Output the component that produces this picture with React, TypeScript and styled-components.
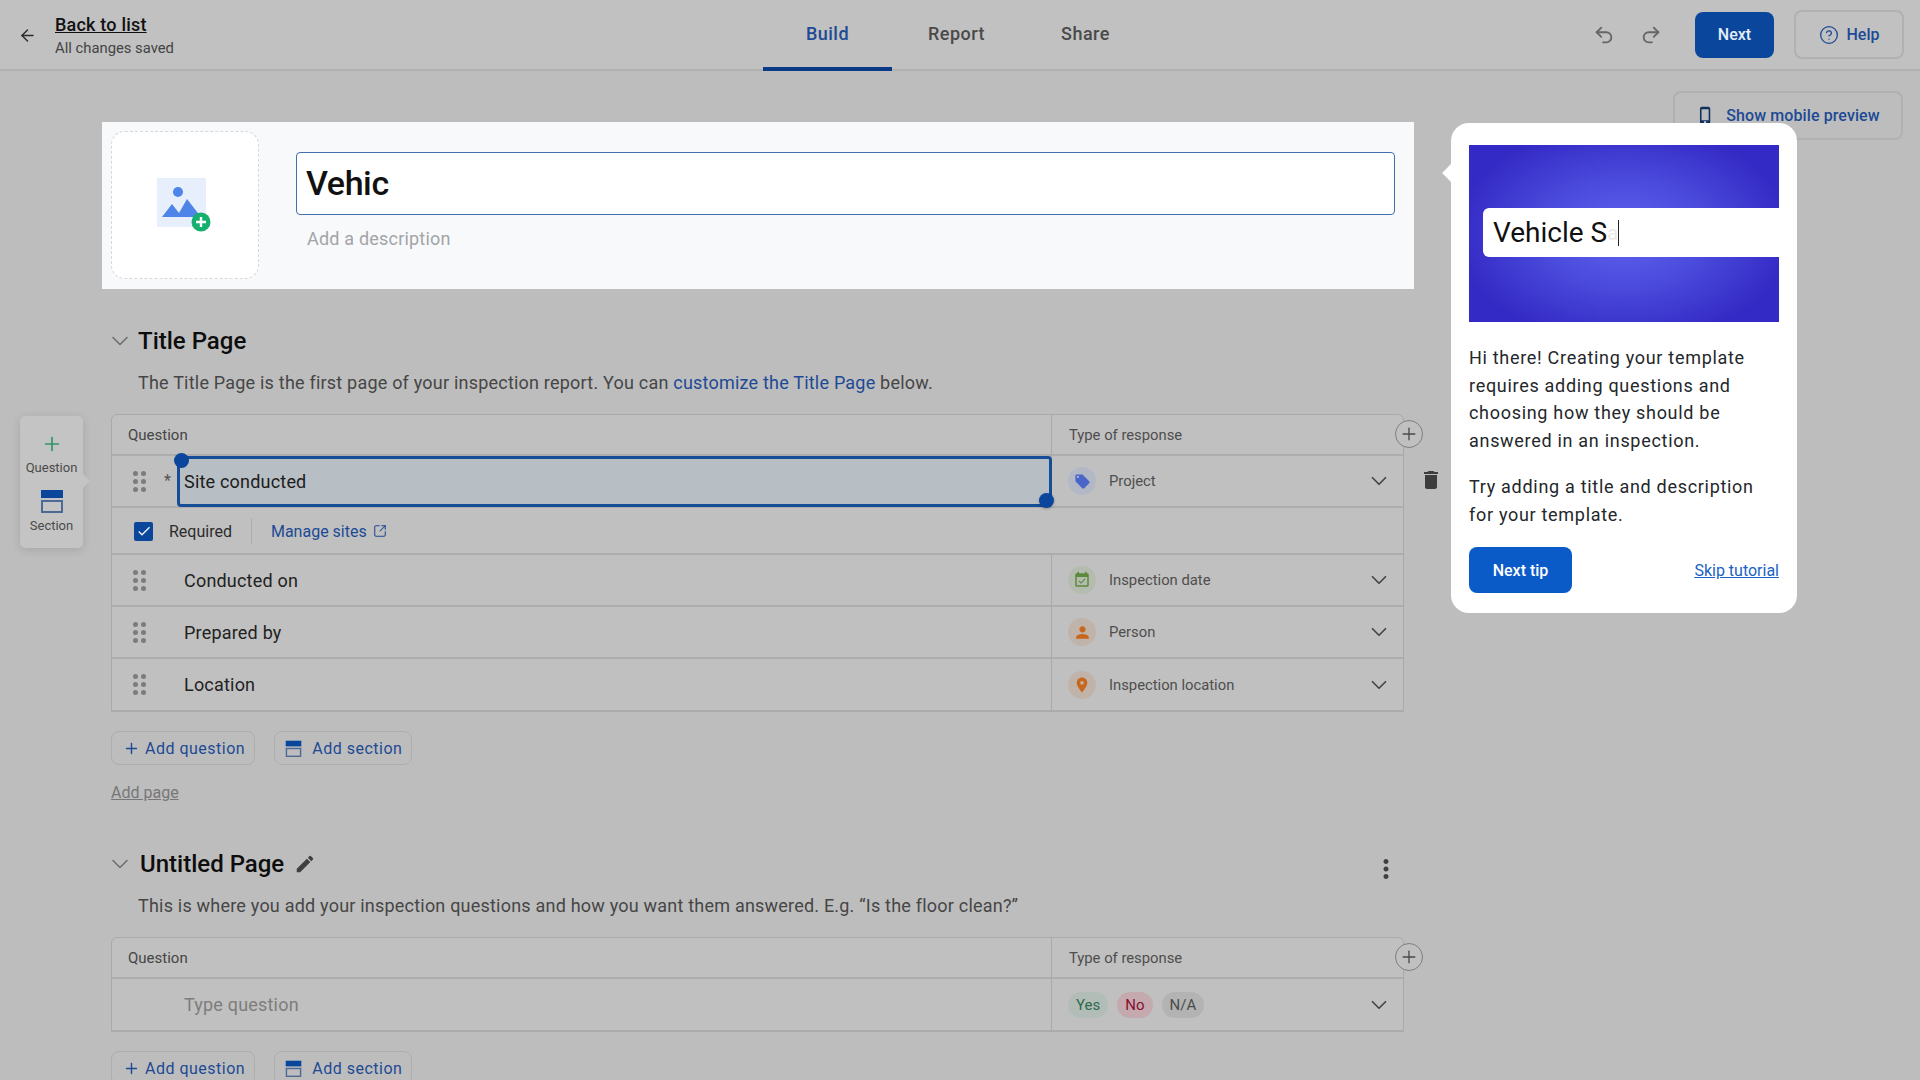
import * as React from 'react';
import styled, { createGlobalStyle } from 'styled-components';
import { ArrowLeft, ChevronDown, CircleHelp, Plus, Redo2, SquareArrowOutUpRight, Undo2 } from 'lucide-react';
import { MdCheck, MdDelete, MdEdit, MdEventAvailable, MdLocalOffer, MdMoreVert, MdPerson, MdPhoneIphone, MdPlace } from 'react-icons/md';

const GlobalStyle = createGlobalStyle`
  html, body {
    margin: 0;
    padding: 0;
    background: #bdbdbd;
    font-family: Roboto, "Liberation Sans", sans-serif;
    overflow: hidden;
  }
  * { box-sizing: border-box; }
`;

const Page = styled.div`
  position: relative;
  width: 1920px;
  height: 1080px;
  overflow: hidden;
  background: #bdbdbd;
`;

const TopBar = styled.header`
  display: grid;
  grid-template-columns: 763px 387px 1fr;
  height: 71px;
  background: #c1c1c1;
  border-bottom: 2px solid #b0b0b0;
`;

const BackArea = styled.div`
  display: flex;
  align-items: center;
  padding-left: 18px;
  gap: 18px;
  color: #2b2b2b;
`;

const BackText = styled.div`
  display: flex;
  flex-direction: column;
  gap: 5px;
  padding-bottom: 2px;
`;

const BackLink = styled.a`
  font-size: 18px;
  line-height: 21px;
  font-weight: 500;
  letter-spacing: 0.2px;
  color: #111;
  text-decoration: underline;
`;

const SavedNote = styled.span`
  font-size: 14.8px;
  line-height: 16px;
  color: #444;
`;

const Tabs = styled.nav`
  display: grid;
  grid-template-columns: repeat(3, 129px);
`;

const Tab = styled.div<{ $active?: boolean }>`
  display: flex;
  align-items: center;
  justify-content: center;
  height: 71px;
  font-size: 18px;
  font-weight: 500;
  letter-spacing: 0.5px;
  color: ${p => (p.$active ? '#1d4a94' : '#4a4a4a')};
  border-bottom: ${p => (p.$active ? '4px solid #0a3a86' : '4px solid transparent')};
`;

const TopActions = styled.div`
  display: flex;
  align-items: center;
  justify-content: flex-end;
  padding: 0 16px 2px 0;
`;

const HistoryButton = styled.span`
  display: flex;
  width: 24px;
  justify-content: center;
  margin-right: 23px;
  color: #666;
`;

const NextButton = styled.button`
  width: 79px;
  height: 46px;
  margin: 0 20px 0 9px;
  border: 0;
  border-radius: 8px;
  background: #0a469c;
  color: #e6edf7;
  font: 500 16px Roboto, sans-serif;
`;

const OutlineButton = styled.button`
  display: flex;
  align-items: center;
  justify-content: center;
  gap: 8px;
  background: transparent;
  border: 2px solid #b1b1b1;
  border-radius: 8px;
  color: #1d4a94;
  font: 500 16px Roboto, sans-serif;
`;

const HelpButton = styled(OutlineButton)`
  width: 110px;
  height: 49px;
`;

const Main = styled.main`
  display: flex;
  align-items: flex-start;
  justify-content: space-between;
  padding: 20px 17px 0 102px;
`;

const Editor = styled.div`
  width: 1312px;
  margin-top: 31px;
`;

const PreviewButton = styled(OutlineButton)`
  width: 230px;
  height: 49px;
  gap: 11px;
  letter-spacing: 0.1px;
`;

const TemplateCard = styled.section`
  display: flex;
  height: 167px;
  padding: 9px 19px 0 9px;
  gap: 37px;
  background: #f8f9fa;
`;

const LogoTile = styled.div`
  display: flex;
  align-items: center;
  justify-content: center;
  width: 148px;
  height: 148px;
  padding-top: 8px;
  background: #fff;
  border: 1px dashed #d5d8dd;
  border-radius: 14px;
`;

const TitleColumn = styled.div`
  flex: 1;
  padding-top: 21px;
`;

const TitleInput = styled.div`
  display: flex;
  align-items: center;
  height: 63px;
  padding: 0 0 1px 9px;
  background: #fff;
  border: 1px solid #3f6fae;
  border-radius: 4px;
  font-size: 34px;
  font-weight: 500;
  letter-spacing: -0.4px;
  color: #111;
`;

const DescriptionHint = styled.div`
  margin: 12px 0 0 11px;
  font-size: 18px;
  line-height: 24px;
  letter-spacing: 0.2px;
  color: #a2a4a8;
`;

const PageSection = styled.section<{ $top: number }>`
  margin-top: ${p => p.$top}px;
  padding-left: 9px;
  width: 1302px;
`;

const PageHead = styled.div`
  position: relative;
  display: flex;
  align-items: center;
  height: 32px;
  color: #6e6e6e;
`;

const CollapseIcon = styled.span`
  display: flex;
  margin-left: -5px;
`;

const PageTitle = styled.h2<{ $gap: number }>`
  margin: 0 0 0 ${p => p.$gap}px;
  font-size: 24px;
  line-height: 32px;
  font-weight: 500;
  color: #0d0d0d;
`;

const PencilWrap = styled.span`
  display: flex;
  margin-left: 10px;
  color: #3f3f3f;
`;

const MoreWrap = styled.span`
  position: absolute;
  left: 1260px;
  top: 6px;
  display: flex;
  color: #3f3f3f;
`;

const PageBlurb = styled.p`
  margin: 14px 0 19px 27px;
  font-size: 18px;
  line-height: 24px;
  letter-spacing: 0.21px;
  color: #464646;
`;

const BlurbLink = styled.a`
  color: #1d4a94;
`;

const Table = styled.div`
  position: relative;
  width: 1293px;
  border: 1px solid #a9a9a9;
  border-radius: 6px 6px 0 0;
  background: #c0c0c0;
`;

const Row = styled.div<{ $h: number }>`
  display: grid;
  grid-template-columns: 940px 1fr;
  height: ${p => p.$h}px;
  border-bottom: 2px solid #adadad;
  &:last-child { border-bottom-width: 1px; }
`;

const QuestionCell = styled.div`
  position: relative;
  display: flex;
  align-items: center;
  border-right: 1px solid #a9a9a9;
`;

const HeadLabel = styled.span`
  padding-left: 16px;
  font-size: 15px;
  color: #454545;
`;

const Dots = styled.span`
  display: grid;
  grid-template-columns: repeat(2, 5px);
  gap: 3px;
  margin-left: 21px;
  width: 13px;
  flex: none;
`;

const Dot = styled.i`
  width: 5px;
  height: 5px;
  border-radius: 50%;
  background: #7c7c7c;
`;

const Star = styled.span`
  position: absolute;
  left: 52px;
  top: 15px;
  font-size: 16px;
  color: #555;
`;

const QuestionText = styled.span<{ $muted?: boolean }>`
  margin-left: 38px;
  font-size: 18px;
  letter-spacing: 0.2px;
  color: ${p => (p.$muted ? '#7d7d7d' : '#222')};
`;

const EmptyText = styled(QuestionText)`
  margin-left: 72px;
`;

const ActiveField = styled.div`
  position: absolute;
  left: 65px;
  top: 0;
  right: -1px;
  bottom: -1px;
  display: flex;
  align-items: center;
  padding-left: 4px;
  background: #b8bfc4;
  border: 3px solid #164d97;
  border-radius: 4px;
  font-size: 18px;
  letter-spacing: 0.2px;
  color: #1c1c1c;
`;

const Handle = styled.span<{ $corner: 'start' | 'end' }>`
  position: absolute;
  width: 15px;
  height: 15px;
  border-radius: 50%;
  background: #0a469c;
  z-index: 2;
  ${p => (p.$corner === 'start' ? 'left: -6px; top: -6px;' : 'right: -5px; bottom: -4px; box-shadow: 0 1px 3px rgba(0,0,0,.25);')}
`;

const ResponseCell = styled.div`
  display: flex;
  align-items: center;
  padding-left: 16px;
  padding-right: 11px;
`;

const TypeIcon = styled.span<{ $bg: string; $fg: string }>`
  display: flex;
  align-items: center;
  justify-content: center;
  flex: none;
  width: 28px;
  height: 28px;
  border-radius: 50%;
  background: ${p => p.$bg};
  color: ${p => p.$fg};
`;

const TypeLabel = styled.span`
  flex: 1;
  margin-left: 13px;
  font-size: 14.8px;
  color: #4e4e4e;
`;

const TypeHead = styled(TypeLabel)`
  margin-left: 1px;
`;

const Caret = styled.span`
  display: flex;
  color: #464646;
`;

const RequiredRow = styled.div`
  display: flex;
  align-items: center;
  height: 47px;
  padding: 1px 0 0 22px;
  border-bottom: 2px solid #adadad;
`;

const Checkbox = styled.span`
  display: flex;
  align-items: center;
  justify-content: center;
  width: 19px;
  height: 19px;
  border-radius: 2px;
  background: #0a469c;
  color: #eef2f8;
`;

const RequiredLabel = styled.span`
  margin-left: 16px;
  font-size: 16px;
  color: #2c2c2c;
`;

const VRule = styled.span`
  width: 1px;
  height: 26px;
  margin: 0 19px;
  background: #aeaeae;
`;

const ManageLink = styled.a`
  display: flex;
  align-items: center;
  gap: 6px;
  font-size: 16px;
  color: #1d4a94;
`;

const AddColumn = styled.span`
  position: absolute;
  right: -20px;
  top: 5px;
  display: flex;
  align-items: center;
  justify-content: center;
  width: 28px;
  height: 28px;
  border-radius: 50%;
  border: 1px solid #7e7e7e;
  background: #c0c0c0;
  color: #4a4a4a;
`;

const TrashWrap = styled.span`
  position: absolute;
  right: -40px;
  top: 53px;
  display: flex;
  color: #3d3d3d;
`;

const AddRow = styled.div`
  display: flex;
  gap: 19px;
  margin-top: 19px;
`;

const AddButton = styled.button`
  display: flex;
  align-items: center;
  height: 34px;
  padding: 0 9px 0 11px;
  gap: 5px;
  background: transparent;
  border: 1px solid #aeaeae;
  border-radius: 8px;
  color: #1d4a94;
  font: 400 16px Roboto, sans-serif;
  letter-spacing: 0.5px;
`;

const AddSectionButton = styled(AddButton)`
  gap: 10px;
  padding-left: 10px;
`;

const AddPage = styled.a`
  display: inline-block;
  margin-top: 19px;
  font-size: 16px;
  line-height: 18px;
  color: #777;
  text-decoration: underline;
`;

const Chip = styled.span<{ $bg: string; $fg: string }>`
  display: flex;
  align-items: center;
  height: 26px;
  padding: 0 8px;
  margin-right: 9px;
  border-radius: 13px;
  font-size: 15px;
  background: ${p => p.$bg};
  color: ${p => p.$fg};
`;

const Spacer = styled.span`
  flex: 1;
`;

const SideRail = styled.aside`
  position: absolute;
  left: 20px;
  top: 416px;
  width: 63px;
  height: 132px;
  display: flex;
  flex-direction: column;
  align-items: center;
  padding-top: 17px;
  background: #c4c4c4;
  border-radius: 5px;
  box-shadow: 0 2px 10px rgba(0, 0, 0, 0.12);
  &::after {
    content: '';
    position: absolute;
    right: -5px;
    top: 60px;
    width: 10px;
    height: 10px;
    background: #c4c4c4;
    transform: rotate(45deg);
  }
`;

const RailLabel = styled.span`
  font-size: 13px;
  line-height: 16px;
  color: #4a4a4a;
  margin-top: 5px;
`;

const RailPlus = styled.span`
  display: flex;
  color: #2f9468;
`;

const RailGap = styled.span`
  height: 13px;
`;

const Tip = styled.aside`
  position: absolute;
  left: 1451px;
  top: 123px;
  width: 346px;
  height: 490px;
  padding: 22px 18px 0;
  background: #fff;
  border-radius: 18px;
  &::before {
    content: '';
    position: absolute;
    left: -6px;
    top: 43px;
    width: 14px;
    height: 14px;
    background: #fff;
    transform: rotate(45deg);
  }
`;

const TipArt = styled.div`
  display: flex;
  align-items: center;
  height: 177px;
  padding: 0 0 2px 14px;
  background:
    radial-gradient(ellipse 170px 110px at 50% 50%, #6063f0 0%, #4a4adc 50%, transparent 100%),
    #3329c4;
`;

const TipArtInput = styled.div`
  display: flex;
  align-items: center;
  flex: 1;
  height: 49px;
  padding-left: 10px;
  background: #fff;
  border-radius: 6px 0 0 6px;
  font-size: 28px;
  color: #111;
`;

const GhostLetter = styled.span`
  font-size: 20px;
  color: #e8e8e8;
`;

const Cursor = styled.span`
  width: 1px;
  height: 26px;
  background: #222;
`;

const TipText = styled.p`
  margin: 22px 0 0;
  font-size: 18px;
  line-height: 27.7px;
  letter-spacing: 0.7px;
  color: #24272b;
`;

const TipTextNext = styled(TipText)`
  margin-top: 18px;
`;

const TipActions = styled.div`
  display: flex;
  align-items: center;
  justify-content: space-between;
  margin-top: 19px;
`;

const TipButton = styled.button`
  width: 103px;
  height: 46px;
  border: 0;
  border-radius: 8px;
  background: #0a5bc8;
  color: #fff;
  font: 500 16px Roboto, sans-serif;
`;

const SkipLink = styled.a`
  font-size: 16px;
  color: #1a62c4;
  text-decoration: underline;
`;

const DragDots = () => (
  <Dots>
    {[0, 1, 2, 3, 4, 5].map(i => (
      <Dot key={i} />
    ))}
  </Dots>
);

const SectionIcon = ({ size }: { size: number }) => (
  <svg width={size} height={size} viewBox="0 0 24 24">
    <rect x="1" y="1" width="22" height="8" fill="#0a469c" />
    <rect x="2" y="12" width="20" height="11" fill="none" stroke="#4d6a96" strokeWidth="2" />
  </svg>
);

const ImageAddIcon = () => (
  <svg width="60" height="62" viewBox="0 0 60 62">
    <rect x="2" y="0" width="49" height="49" fill="#e7effc" />
    <circle cx="23" cy="14" r="5" fill="#4f84e8" />
    <path d="M7 39 L17 26 L24 35 L32 21 L46 39 Z" fill="#4f84e8" />
    <circle cx="46" cy="44" r="9.5" fill="#16b06e" />
    <path d="M46 39 V49 M41 44 H51" stroke="#fff" strokeWidth="2.4" />
  </svg>
);

const AddButtons = () => (
  <AddRow>
    <AddButton>
      <Plus size={17} strokeWidth={2} />
      Add question
    </AddButton>
    <AddSectionButton>
      <SectionIcon size={17} />
      Add section
    </AddSectionButton>
  </AddRow>
);

const SelectCaret = () => (
  <Caret>
    <ChevronDown size={26} strokeWidth={1.6} />
  </Caret>
);

const Collapse = () => (
  <CollapseIcon>
    <ChevronDown size={28} strokeWidth={1.3} />
  </CollapseIcon>
);

interface ResponseRow {
  question: string;
  label: string;
  bg: string;
  fg: string;
  icon: React.ReactNode;
}

const rows: ResponseRow[] = [
  { question: 'Conducted on', label: 'Inspection date', bg: '#b4bcaf', fg: '#5b8a3c', icon: <MdEventAvailable size={18} /> },
  { question: 'Prepared by', label: 'Person', bg: '#bfb3aa', fg: '#c8671c', icon: <MdPerson size={19} /> },
  { question: 'Location', label: 'Inspection location', bg: '#bfb3aa', fg: '#c8671c', icon: <MdPlace size={18} /> },
];

export default function App() {
  return (
    <Page>
      <GlobalStyle />
      <TopBar>
        <BackArea>
          <ArrowLeft size={19} strokeWidth={1.8} />
          <BackText>
            <BackLink>Back to list</BackLink>
            <SavedNote>All changes saved</SavedNote>
          </BackText>
        </BackArea>
        <Tabs>
          <Tab $active>Build</Tab>
          <Tab>Report</Tab>
          <Tab>Share</Tab>
        </Tabs>
        <TopActions>
          <HistoryButton>
            <Undo2 size={22} strokeWidth={2} />
          </HistoryButton>
          <HistoryButton>
            <Redo2 size={22} strokeWidth={2} />
          </HistoryButton>
          <NextButton>Next</NextButton>
          <HelpButton>
            <CircleHelp size={20} strokeWidth={1.6} />
            Help
          </HelpButton>
        </TopActions>
      </TopBar>

      <Main>
        <Editor>
          <TemplateCard>
            <LogoTile>
              <ImageAddIcon />
            </LogoTile>
            <TitleColumn>
              <TitleInput>Vehic</TitleInput>
              <DescriptionHint>Add a description</DescriptionHint>
            </TitleColumn>
          </TemplateCard>

          <PageSection $top={36}>
            <PageHead>
              <Collapse />
              <PageTitle $gap={4}>Title Page</PageTitle>
            </PageHead>
            <PageBlurb>
              The Title Page is the first page of your inspection report. You can{' '}
              <BlurbLink>customize the Title Page</BlurbLink> below.
            </PageBlurb>
            <Table>
              <AddColumn>
                <Plus size={20} strokeWidth={1.6} />
              </AddColumn>
              <TrashWrap>
                <MdDelete size={24} />
              </TrashWrap>
              <Row $h={41}>
                <QuestionCell>
                  <HeadLabel>Question</HeadLabel>
                </QuestionCell>
                <ResponseCell>
                  <TypeHead>Type of response</TypeHead>
                </ResponseCell>
              </Row>
              <Row $h={52}>
                <QuestionCell>
                  <DragDots />
                  <Star>*</Star>
                  <ActiveField>
                    <Handle $corner="start" />
                    <Handle $corner="end" />
                    Site conducted
                  </ActiveField>
                </QuestionCell>
                <ResponseCell>
                  <TypeIcon $bg="#b3b8c6" $fg="#4a66c8">
                    <MdLocalOffer size={17} />
                  </TypeIcon>
                  <TypeLabel>Project</TypeLabel>
                  <SelectCaret />
                </ResponseCell>
              </Row>
              <RequiredRow>
                <Checkbox>
                  <MdCheck size={16} />
                </Checkbox>
                <RequiredLabel>Required</RequiredLabel>
                <VRule />
                <ManageLink>
                  Manage sites
                  <SquareArrowOutUpRight size={14} strokeWidth={1.8} />
                </ManageLink>
              </RequiredRow>
              {rows.map(r => (
                <Row key={r.question} $h={52}>
                  <QuestionCell>
                    <DragDots />
                    <QuestionText>{r.question}</QuestionText>
                  </QuestionCell>
                  <ResponseCell>
                    <TypeIcon $bg={r.bg} $fg={r.fg}>
                      {r.icon}
                    </TypeIcon>
                    <TypeLabel>{r.label}</TypeLabel>
                    <SelectCaret />
                  </ResponseCell>
                </Row>
              ))}
            </Table>
            <AddButtons />
            <AddPage>Add page</AddPage>
          </PageSection>

          <PageSection $top={46}>
            <PageHead>
              <Collapse />
              <PageTitle $gap={6}>Untitled Page</PageTitle>
              <PencilWrap>
                <MdEdit size={22} />
              </PencilWrap>
              <MoreWrap>
                <MdMoreVert size={30} />
              </MoreWrap>
            </PageHead>
            <PageBlurb>
              This is where you add your inspection questions and how you want them answered. E.g. “Is the floor clean?”
            </PageBlurb>
            <Table>
              <AddColumn>
                <Plus size={20} strokeWidth={1.6} />
              </AddColumn>
              <Row $h={41}>
                <QuestionCell>
                  <HeadLabel>Question</HeadLabel>
                </QuestionCell>
                <ResponseCell>
                  <TypeHead>Type of response</TypeHead>
                </ResponseCell>
              </Row>
              <Row $h={52}>
                <QuestionCell>
                  <EmptyText $muted>Type question</EmptyText>
                </QuestionCell>
                <ResponseCell>
                  <Chip $bg="#b3bdb7" $fg="#2d6b4c">Yes</Chip>
                  <Chip $bg="#c4a9ae" $fg="#8a1030">No</Chip>
                  <Chip $bg="#b3b3b3" $fg="#4c4c4c">N/A</Chip>
                  <Spacer />
                  <SelectCaret />
                </ResponseCell>
              </Row>
            </Table>
            <AddButtons />
          </PageSection>
        </Editor>

        <PreviewButton>
          <MdPhoneIphone size={19} color="#10315f" />
          Show mobile preview
        </PreviewButton>
      </Main>

      <SideRail>
        <RailPlus>
          <Plus size={22} strokeWidth={1.8} />
        </RailPlus>
        <RailLabel>Question</RailLabel>
        <RailGap />
        <SectionIcon size={24} />
        <RailLabel>Section</RailLabel>
      </SideRail>

      <Tip>
        <TipArt>
          <TipArtInput>
            Vehicle S
            <GhostLetter>a</GhostLetter>
            <Cursor />
          </TipArtInput>
        </TipArt>
        <TipText>
          Hi there! Creating your template requires adding questions and choosing how they should be answered in an inspection.
        </TipText>
        <TipTextNext>Try adding a title and description for your template.</TipTextNext>
        <TipActions>
          <TipButton>Next tip</TipButton>
          <SkipLink>Skip tutorial</SkipLink>
        </TipActions>
      </Tip>
    </Page>
  );
}
